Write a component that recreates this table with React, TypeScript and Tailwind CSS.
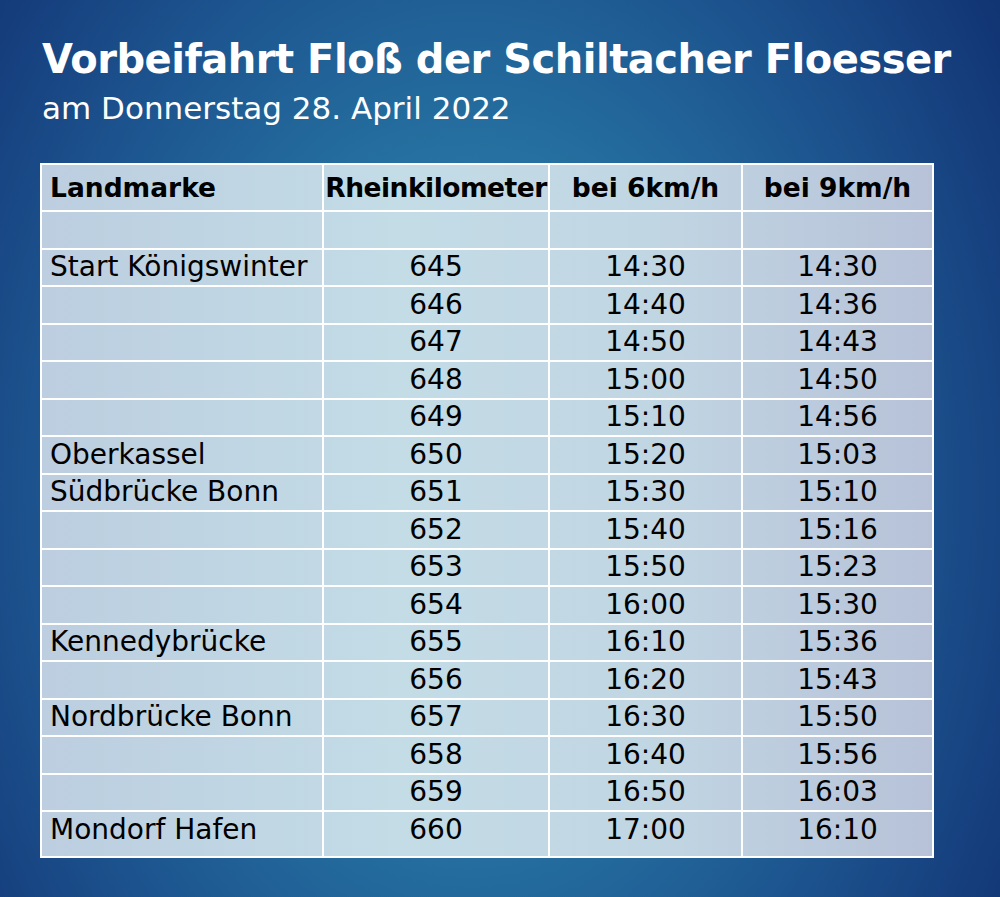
const rows: [string, string, string, string][] = [
  ["", "", "", ""],
  ["Start Königswinter", "645", "14:30", "14:30"],
  ["", "646", "14:40", "14:36"],
  ["", "647", "14:50", "14:43"],
  ["", "648", "15:00", "14:50"],
  ["", "649", "15:10", "14:56"],
  ["Oberkassel", "650", "15:20", "15:03"],
  ["Südbrücke Bonn", "651", "15:30", "15:10"],
  ["", "652", "15:40", "15:16"],
  ["", "653", "15:50", "15:23"],
  ["", "654", "16:00", "15:30"],
  ["Kennedybrücke", "655", "16:10", "15:36"],
  ["", "656", "16:20", "15:43"],
  ["Nordbrücke Bonn", "657", "16:30", "15:50"],
  ["", "658", "16:40", "15:56"],
  ["", "659", "16:50", "16:03"],
  ["Mondorf Hafen", "660", "17:00", "16:10"],
];

export default function App() {
  return (
    <div
      className="w-[1000px] h-[897px] overflow-hidden bg-[#0c2866] bg-[radial-gradient(ellipse_72%_110%_at_47%_55%,#2c82aa_0%,#2570a0_35%,#1d5690_58%,#163f7e_78%,#0c2866_100%)] text-white"
      style={{ fontFamily: '"DejaVu Sans", sans-serif' }}
    >
      <div className="pl-[42px] pt-[33px]">
        <h1 className="text-[40px] leading-[52px] font-bold tracking-[-0.5px]">Vorbeifahrt Floß der Schiltacher Floesser</h1>
        <p className="mt-[6px] text-[31px] leading-[34px]">am Donnerstag 28. April 2022</p>
      </div>
      <div className="pl-[40px] pt-[38px]">
        <table className="border-collapse border-2 border-white text-black bg-[linear-gradient(90deg,#bccee0_0%,#c3dce6_40%,#c1d6e3_68%,#b7c2d8_100%)]">
          <colgroup>
            <col className="w-[282px]" />
            <col className="w-[226px]" />
            <col className="w-[193px]" />
            <col className="w-[191px]" />
          </colgroup>
          <thead>
            <tr className="h-[47px] text-[26.5px] font-bold">
              <th className="border-2 border-white text-left pl-[8px] font-bold">Landmarke</th>
              <th className="border-2 border-white text-center font-bold tracking-[-0.5px]">Rheinkilometer</th>
              <th className="border-2 border-white text-center font-bold">bei 6km/h</th>
              <th className="border-2 border-white text-center font-bold">bei 9km/h</th>
            </tr>
          </thead>
          <tbody>
            {rows.map((r, i) => {
              const last = i === rows.length - 1;
              return (
                <tr key={i} className={last ? "h-[46px] text-[28px] leading-none align-top" : "h-[37.5px] text-[28px] leading-none"}>
                  <td className={last ? "border-2 border-white pl-[8px] pt-[4px] text-left" : "border-2 border-white pl-[8px] text-left"}>{r[0]}</td>
                  <td className={last ? "border-2 border-white pt-[4px] text-center" : "border-2 border-white text-center"}>{r[1]}</td>
                  <td className={last ? "border-2 border-white pt-[4px] text-center" : "border-2 border-white text-center"}>{r[2]}</td>
                  <td className={last ? "border-2 border-white pt-[4px] text-center" : "border-2 border-white text-center"}>{r[3]}</td>
                </tr>
              );
            })}
          </tbody>
        </table>
      </div>
    </div>
  );
}
